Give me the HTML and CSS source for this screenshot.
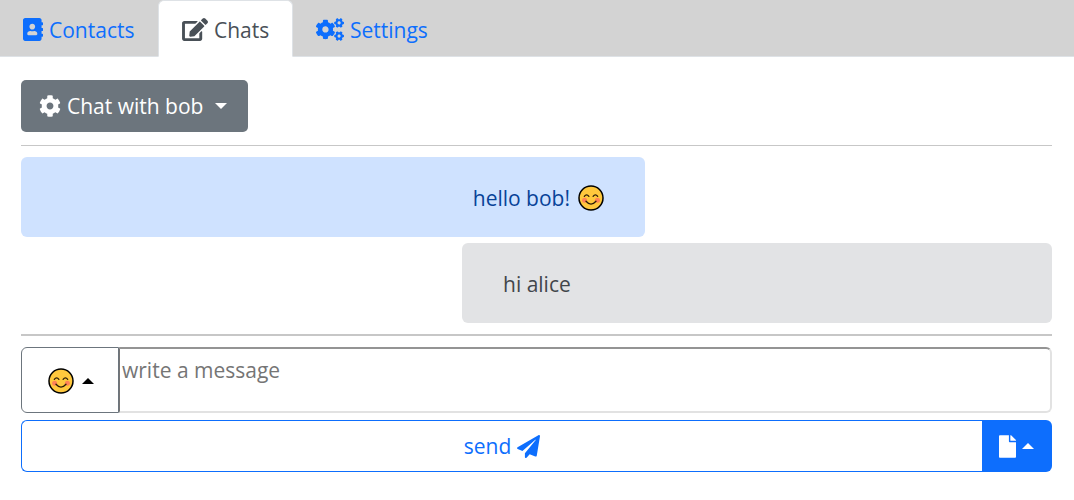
FILE: index.html
```html
<!DOCTYPE html>
<html lang="en">
<head>
<meta charset="utf-8">
<title>Chats</title>
<link rel="stylesheet" href="styles.css">
</head>
<body>
<svg class="defs" width="0" height="0" aria-hidden="true">
  <symbol id="smile" viewBox="0 0 26 26">
    <circle cx="13" cy="13" r="12" fill="#ffc83d" stroke="#000" stroke-width="1.5"/>
    <circle cx="6.6" cy="15.2" r="2.5" fill="#ff8257"/>
    <circle cx="19.4" cy="15.2" r="2.5" fill="#ff8257"/>
    <g fill="none" stroke="#2b1c08" stroke-width="1.3" stroke-linecap="round">
      <path d="M6.3 11.3Q8.6 8.3 10.9 11.3"/>
      <path d="M15.1 11.3Q17.4 8.3 19.7 11.3"/>
      <path d="M8 16.3Q13 22 18 16.3"/>
    </g>
  </symbol>
</svg>
<nav class="tabs">
  <a class="tab tab-contacts"><svg class="icon" width="20" height="23" viewBox="0 0 448 512"><path d="M436 160c6.6 0 12-5.4 12-12v-40c0-6.6-5.4-12-12-12h-20V48c0-26.5-21.5-48-48-48H48C21.5 0 0 21.5 0 48v416c0 26.5 21.5 48 48 48h320c26.5 0 48-21.5 48-48v-48h20c6.6 0 12-5.4 12-12v-40c0-6.6-5.4-12-12-12h-20v-64h20c6.6 0 12-5.4 12-12v-40c0-6.6-5.4-12-12-12h-20v-64h20zm-228-32c35.3 0 64 28.7 64 64s-28.7 64-64 64-64-28.7-64-64 28.7-64 64-64zm112 236.8c0 10.6-10 19.2-22.4 19.2H118.4C106 384 96 375.4 96 364.8v-19.2c0-31.8 30.1-57.6 67.2-57.6h5c12.3 5.1 25.7 8 39.8 8s27.6-2.9 39.8-8h5c37.1 0 67.2 25.8 67.2 57.6v19.2z"/></svg><span class="label-contacts">Contacts</span></a>
  <a class="tab active"><svg class="icon" width="26" height="23" viewBox="0 0 576 512"><path d="M402.6 83.2l90.2 90.2c3.8 3.8 3.8 10 0 13.8L274.4 405.6l-92.8 10.3c-12.4 1.4-22.9-9.1-21.5-21.5l10.3-92.8L388.8 83.2c3.8-3.8 10-3.8 13.8 0zm162-22.9l-48.8-48.8c-15.2-15.2-39.9-15.2-55.2 0l-35.4 35.4c-3.8 3.8-3.8 10 0 13.8l90.2 90.2c3.8 3.8 10 3.8 13.8 0l35.4-35.4c15.2-15.3 15.2-40 0-55.2zM384 346.2V448H64V128h229.8c3.2 0 6.2-1.3 8.5-3.5l40-40c7.6-7.6 2.2-20.5-8.5-20.5H48C21.5 64 0 85.5 0 112v352c0 26.5 21.5 48 48 48h352c26.5 0 48-21.5 48-48V306.2c0-10.7-12.9-16-20.5-8.5l-40 40c-2.2 2.3-3.5 5.3-3.5 8.5z"/></svg><span class="label-chats">Chats</span></a>
  <a class="tab tab-settings"><svg class="icon" width="28" height="23" viewBox="0 0 640 512"><path id="small-gear" d="M512.1 191l-8.2 14.3c-3 5.3-9.4 7.5-15.1 5.4-11.8-4.4-22.6-10.7-32.1-18.6-4.6-3.8-5.8-10.5-2.8-15.7l8.2-14.3c-6.9-8-12.3-17.3-15.9-27.4h-16.5c-6 0-11.2-4.3-12.2-10.3-2-12-2.1-24.6 0-37.1 1-6 6.2-10.4 12.2-10.4h16.5c3.6-10.1 9-19.4 15.9-27.4l-8.2-14.3c-3-5.2-1.9-11.9 2.8-15.7 9.5-7.9 20.4-14.2 32.1-18.6 5.7-2.1 12.1.1 15.1 5.4l8.2 14.3c10.5-1.9 21.2-1.9 31.7 0L552 6.3c3-5.3 9.4-7.5 15.1-5.4 11.8 4.4 22.6 10.7 32.1 18.6 4.6 3.8 5.8 10.5 2.8 15.7l-8.2 14.3c6.9 8 12.3 17.3 15.9 27.4h16.5c6 0 11.2 4.3 12.2 10.3 2 12 2.1 24.6 0 37.1-1 6-6.2 10.4-12.2 10.4h-16.5c-3.6 10.1-9 19.4-15.9 27.4l8.2 14.3c3 5.2 1.9 11.9-2.8 15.7-9.5 7.9-20.4 14.2-32.1 18.6-5.7 2.1-12.1-.1-15.1-5.4l-8.2-14.3c-10.4 1.9-21.2 1.9-31.7 0zm-10.5-58.8c38.5 29.6 82.4-14.3 52.8-52.8-38.5-29.7-82.4 14.3-52.8 52.8z"/><use href="#small-gear" y="300"/><path d="M386.3 286.1l33.7 16.8c10.1 5.8 14.5 18.1 10.5 29.1-8.9 24.2-26.4 46.4-42.6 65.8-7.4 8.9-20.2 11.1-30.3 5.3l-29.1-16.8c-16 13.7-34.6 24.6-54.9 31.7v33.6c0 11.6-8.3 21.6-19.7 23.6-24.6 4.2-50.4 4.4-75.9 0-11.5-2-20-11.9-20-23.6V418c-20.3-7.2-38.9-18-54.9-31.7L74 403c-10 5.8-22.9 3.6-30.3-5.3-16.2-19.4-33.3-41.6-42.2-65.7-4-10.9.4-23.2 10.5-29.1l33.3-16.8c-3.9-20.9-3.9-42.4 0-63.4L12 205.8c-10.1-5.8-14.6-18.1-10.5-29 8.9-24.2 26-46.4 42.2-65.8 7.4-8.9 20.2-11.1 30.3-5.3l29.1 16.8c16-13.7 34.6-24.6 54.9-31.7V57.1c0-11.5 8.2-21.5 19.6-23.5 24.6-4.2 50.5-4.4 76-.1 11.5 2 20 11.9 20 23.6v33.6c20.3 7.2 38.9 18 54.9 31.7l29.1-16.8c10-5.8 22.9-3.6 30.3 5.3 16.2 19.4 33.2 41.6 42.1 65.8 4 10.9.1 23.2-10 29.1l-33.7 16.8c3.9 21 3.9 42.5 0 63.5zm-117.6 21.1c59.2-77-28.7-164.9-105.7-105.7-59.2 77 28.7 164.9 105.7 105.7z"/></svg><span class="label-settings">Settings</span></a>
</nav>
<main class="content">
  <button class="chat-menu"><svg class="icon" width="22" height="22" viewBox="0 0 512 512"><path d="M487.4 315.7l-42.6-24.6c4.3-23.2 4.3-47 0-70.2l42.6-24.6c4.9-2.8 7.1-8.6 5.5-14-11.1-35.6-30-67.8-54.7-94.6-3.8-4.1-10-5.1-14.8-2.3L380.8 110c-17.9-15.4-38.5-27.3-60.8-35.1V25.8c0-5.6-3.9-10.5-9.4-11.7-36.7-8.2-74.3-7.8-109.2 0-5.5 1.2-9.4 6.1-9.4 11.7V75c-22.2 7.9-42.8 19.8-60.8 35.1L88.7 85.5c-4.9-2.8-11-1.9-14.8 2.3-24.7 26.7-43.6 58.9-54.7 94.6-1.7 5.4.6 11.2 5.5 14L67.3 221c-4.3 23.2-4.3 47 0 70.2l-42.6 24.6c-4.9 2.8-7.1 8.6-5.5 14 11.1 35.6 30 67.8 54.7 94.6 3.8 4.1 10 5.1 14.8 2.3l42.6-24.6c17.9 15.4 38.5 27.3 60.8 35.1v49.2c0 5.6 3.9 10.5 9.4 11.7 36.7 8.2 74.3 7.8 109.2 0 5.5-1.2 9.4-6.1 9.4-11.7v-49.2c22.2-7.9 42.8-19.8 60.8-35.1l42.6 24.6c4.9 2.8 11 1.9 14.8-2.3 24.7-26.7 43.6-58.9 54.7-94.6 1.5-5.5-.7-11.3-5.6-14.1zM256 336c-44.1 0-80-35.9-80-80s35.9-80 80-80 80 35.9 80 80-35.9 80-80 80z"/></svg><span class="label-chat">Chat with bob</span><i class="caret down"></i></button>
  <hr class="rule">
  <div class="message mine"><span class="text-hello">hello bob!</span><svg class="emoji" width="26" height="26"><use href="#smile"/></svg></div>
  <div class="message theirs"><span class="text-hi">hi alice</span></div>
  <hr class="rule thick">
  <div class="compose">
    <button class="emoji-menu"><svg class="emoji" width="26" height="26"><use href="#smile"/></svg><i class="caret up"></i></button>
    <div class="input"><span class="placeholder">write a message</span></div>
  </div>
  <div class="actions">
    <button class="send"><span class="label-send">send</span><svg class="icon" width="23" height="23" viewBox="0 0 512 512"><path d="M476 3.2L12.5 270.6c-18.1 10.4-15.8 35.6 2.2 43.2L121 358.4l287.3-253.2c5.5-4.9 13.3 2.6 8.6 8.3L176 407v80.5c0 23.6 28.5 32.9 42.5 15.8L282 426l124.6 52.2c14.2 6 30.4-2.9 33-18.2l72-432C515 7.8 493.3-6.8 476 3.2z"/></svg></button>
    <button class="file-menu"><svg class="icon" width="17" height="23" viewBox="0 0 384 512"><path d="M224 136V0H24C10.7 0 0 10.7 0 24v464c0 13.3 10.7 24 24 24h336c13.3 0 24-10.7 24-24V160H248c-13.2 0-24-10.8-24-24zm160-14.1v6.1H256V0h6.1c6.4 0 12.5 2.5 17 7l97.9 98c4.5 4.5 7 10.6 7 16.9z"/></svg><i class="caret up"></i></button>
  </div>
</main>
</body>
</html>
```
FILE: styles.css
```css
* { box-sizing: border-box; }
body { margin: 0; background: #fff; font: 21px/32px "Open Sans", "Noto Sans", sans-serif; color: #212529; }
button { font: inherit; margin: 0; padding: 0; display: flex; align-items: center; }
.defs { position: absolute; }
.icon { fill: currentColor; flex: none; display: block; }
.emoji { flex: none; display: block; }
span { white-space: nowrap; }

.tabs { display: flex; height: 57px; background: #d3d3d3; border-bottom: 1px solid #dee2e6; }
.tab { display: flex; align-items: center; height: 57px; padding: 2px 0 0; color: #0d6efd; }
.tab-contacts { width: 158px; padding-left: 23px; gap: 6px; }
.active { width: 135px; padding-left: 23px; gap: 6px; color: #495057; background: #fff; border: 1px solid #dee2e6; border-bottom-color: #fff; border-radius: 6px 6px 0 0; }
.tab-settings { padding-left: 23px; gap: 6px; }

.content { padding: 23px 22px 0 21px; }
.chat-menu { width: 227px; height: 52px; padding: 0 18px; gap: 6px; border: 0; border-radius: 5px; background: #6c757d; color: #fff; }
.caret { width: 0; height: 0; border: 6px solid transparent; flex: none; }
.down { border-top-color: currentColor; border-bottom: 0; margin-left: 6px; }
.up { border-bottom-color: currentColor; border-top: 0; }
.rule { height: 1px; margin: 13px 0 11px; border: 0; background: #c7c7c7; }
.thick { height: 2px; margin: 11px 0; }
.message { display: flex; align-items: center; height: 80px; border-radius: 6px; padding: 2px 41px 0; }
.mine { width: 624px; justify-content: flex-end; gap: 8px; background: #cfe2ff; color: #084298; }
.theirs { width: 590px; margin: 6px 0 0 auto; background: #e2e3e5; color: #41464b; }

.compose { display: flex; height: 66px; }
.emoji-menu { width: 98px; padding: 2px 0 0 26px; gap: 8px; border: 1px solid #6c757d; border-radius: 6px 0 0 6px; background: #fff; color: #000; }
.input { flex: 1; padding: 5px 2px; border: 2px solid #e2e2e2; border-top-color: #949494; border-left: 1px solid #767676; border-radius: 0 6px 6px 0; color: #757575; }
.actions { display: flex; height: 52px; margin-top: 7px; }
.send { flex: 1; justify-content: center; gap: 6px; border: 1px solid #0d6efd; border-right: 0; border-radius: 6px 0 0 6px; background: #fff; color: #0d6efd; }
.file-menu { width: 70px; padding-left: 17px; gap: 6px; border: 0; border-radius: 0 6px 6px 0; background: #0d6efd; color: #fff; }
```
